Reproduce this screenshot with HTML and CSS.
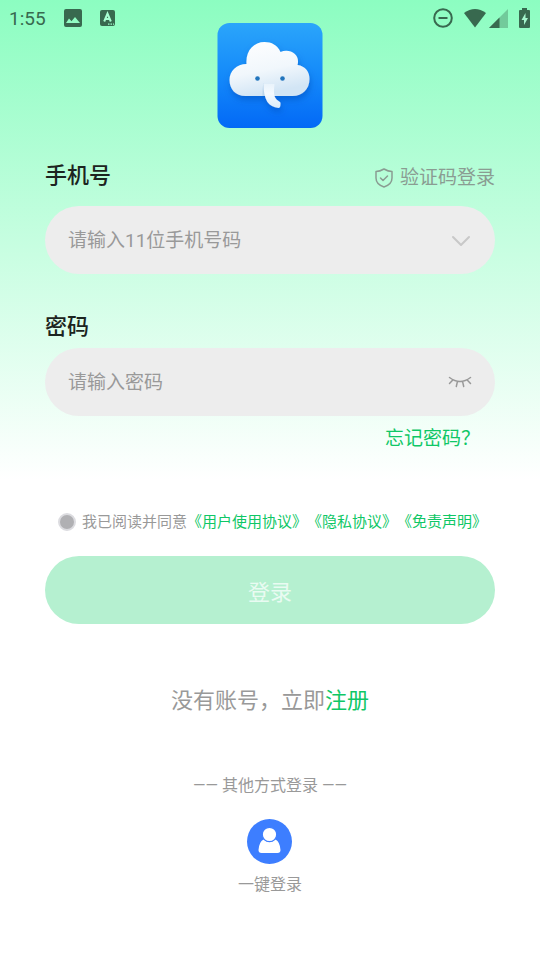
FILE: index.html
```html
<!DOCTYPE html>
<html lang="zh-CN">
<head>
<meta charset="utf-8">
<meta name="viewport" content="width=device-width, initial-scale=1">
<title>登录</title>
<link rel="stylesheet" href="styles.css">
</head>
<body>
<div class="status-bar">
  <div class="status-left">
    <span class="clock">1:55</span>
    <svg width="18" height="18" viewBox="0 0 18 18"><path fill="currentColor" fill-rule="evenodd" d="M2 0h14a2 2 0 0 1 2 2v14a2 2 0 0 1-2 2H2a2 2 0 0 1-2-2V2a2 2 0 0 1 2-2ZM2 14h14l-5-6-3.500 4.300L5 9.600Z"/></svg>
    <svg width="15" height="16" viewBox="0 0 15 16"><rect width="15" height="16" rx="2" fill="currentColor"/><path d="m4.200 11.500 3.300-8 3.300 8M5.500 9h4" fill="none" stroke="#a8ffd2" stroke-width="2"/><path d="M8 14.200h1.500M10.500 14.200H12M13 14.200h1" stroke="#9affca" stroke-width="1.200"/></svg>
  </div>
  <div class="status-right">
    <svg width="20" height="20" viewBox="0 0 20 20" fill="none" stroke="currentColor" stroke-width="2"><circle cx="10" cy="10" r="8.800"/><path d="M5.500 10h9"/></svg>
    <svg class="wifi" width="22" height="19" viewBox="0 0 22 19"><path fill="currentColor" d="M0 4Q11-4 22 4L11 18.500Z"/></svg>
    <svg class="signal" width="19" height="19" viewBox="0 0 19 19"><path fill="currentColor" opacity=".35" d="M19 0v19H0Z"/><path fill="currentColor" d="M10.500 8.500V19H0Z"/></svg>
    <svg width="11" height="20" viewBox="0 0 11 20"><path fill="currentColor" d="M3 0h5v2h2a1 1 0 0 1 1 1v16a1 1 0 0 1-1 1H1a1 1 0 0 1-1-1V3a1 1 0 0 1 1-1h2Z"/><path fill="#a5f5cd" d="M6.500 5 2.500 12H5v5l4-7H6.500Z"/></svg>
  </div>
</div>
<main class="page">
  <svg class="logo" viewBox="0 0 105 105" role="img" aria-label="云朵小象">
    <defs>
      <linearGradient id="sky" x1="0" y1="0" x2="0" y2="1"><stop offset="0" stop-color="#2ba5fa"/><stop offset=".5" stop-color="#148afa"/><stop offset="1" stop-color="#0369f6"/></linearGradient>
      <linearGradient id="cloud" x1="0" y1="0" x2=".3" y2="1"><stop offset="0" stop-color="#fff"/><stop offset=".6" stop-color="#f1f7fc"/><stop offset="1" stop-color="#d2e5f5"/></linearGradient>
      <linearGradient id="trunk" x1="0" y1="0" x2="0" y2="1"><stop offset="0" stop-color="#e9f3fb"/><stop offset=".4" stop-color="#f5faff"/><stop offset="1" stop-color="#dcecf9"/></linearGradient>
      <filter id="shade" x="-20%" y="-20%" width="140%" height="150%"><feDropShadow dx="1" dy="4" stdDeviation="3" flood-color="#0448b8" flood-opacity=".5"/></filter>
    </defs>
    <rect width="105" height="105" rx="12" fill="url(#sky)"/>
    <g filter="url(#shade)">
      <path fill="url(#cloud)" d="M28 73C18 73 12 66 12 57c0-9 7-16 17-16C28 28 36 19 47 19c7 0 13 3 16 10 10-4 20 3 17 13 8 1 12 7 12 14 0 10-7 17-17 17Z"/>
      <path fill="#a9c8e4" opacity=".6" d="M45 73c0-4 0-9 1-13l3 13Z"/>
      <path fill="url(#trunk)" d="M46 61C46 77 51 84 61 85c2 0 2-3 2-5 0-1-1-1-2-2-5-3-5-8-4-17Z"/>
    </g>
    <circle cx="40" cy="55.500" r="2.300" fill="#2275bd"/><circle cx="65" cy="55.500" r="2.300" fill="#2275bd"/>
  </svg>

  <form class="login">
    <div class="label-row">
      <label class="label" for="phone">手机号</label>
      <a class="code-login" href="#">
        <svg width="20" height="20" viewBox="0 0 20 20" fill="none" stroke="currentColor" stroke-width="1.500" stroke-linejoin="round" stroke-linecap="round"><path d="M10 1c3 1.800 5.500 2.500 8 2.500V10c0 4.500-3.500 7.500-8 9-4.500-1.500-8-4.500-8-9V3.500C4.500 3.500 7 2.800 10 1Z"/><path d="m6.500 10 2.500 2.500 4.500-4.500"/></svg>
        验证码登录
      </a>
    </div>
    <div class="field">
      <input id="phone" type="tel" placeholder="请输入11位手机号码">
      <button class="icon-button chevron" type="button" aria-label="选择账号"><svg width="24" height="24" viewBox="0 0 24 24" fill="none" stroke="currentColor" stroke-width="2" stroke-linecap="round" stroke-linejoin="round"><path d="m5 9 8 8 8-8"/></svg></button>
    </div>
    <label class="label password-label" for="password">密码</label>
    <div class="field">
      <input id="password" type="password" placeholder="请输入密码">
      <button class="icon-button" type="button" aria-label="显示密码"><svg width="24" height="24" viewBox="0 0 24 24" fill="none" stroke="currentColor" stroke-width="1.500" stroke-linecap="round"><path d="M1.500 7.500Q12 15.500 22.500 7.500M4.800 10l-3.300 3.500M9.300 12.200 8.300 16.500M14.700 12.200l1 4.300M19.200 10l3.300 3.500"/></svg></button>
    </div>
    <a class="forgot" href="#">忘记密码？</a>
    <div class="agreement">
      <input id="agree" type="checkbox">
      <p><label for="agree">我已阅读并同意</label><a href="#">《用户使用协议》</a><a href="#">《隐私协议》</a><a href="#">《免责声明》</a></p>
    </div>
    <button class="submit" type="submit">登录</button>
  </form>

  <p class="signup">没有账号，立即<a href="#">注册</a></p>
  <p class="other">—— 其他方式登录 ——</p>
  <button class="quick" type="button">
    <svg width="45" height="45" viewBox="0 0 45 45"><circle cx="22.500" cy="22.500" r="22.500" fill="#3d7eff"/><path fill="#fff" d="M16.500 20.500Q22.500 25 28.500 20.500 33 23 33.500 31q0 3-3 3h-16q-3 0-3-3Q12 23 16.500 20.500Z"/><circle cx="22.500" cy="15.500" r="7.200" fill="#fff" stroke="#3d7eff" stroke-width="1.200"/></svg>
    一键登录
  </button>
</main>
</body>
</html>
```

FILE: styles.css
```css
* {
  box-sizing: border-box;
}

body {
  margin: 0;
  min-height: 100vh;
  color: #999;
  background: #fff linear-gradient(#8cfdc1, #fff) no-repeat 0 0 / 100% 480px;
  font-family: Roboto, "Noto Sans CJK SC", sans-serif;
  text-spacing-trim: space-all;
}

a {
  color: #0fc766;
  text-decoration: none;
}

p {
  margin: 0;
}

button,
input {
  font: inherit;
}

button {
  padding: 0;
  border: 0;
  background: none;
}

svg {
  display: block;
  flex: none;
}

/* System bar floats above the page */
.status-bar {
  position: absolute;
  top: 0;
  left: 0;
  right: 0;
  height: 36px;
  padding: 0 10px 0 9px;
  display: flex;
  align-items: center;
  justify-content: space-between;
  color: #38694f;
}

.status-left,
.status-right {
  display: flex;
  align-items: center;
}

.clock {
  font-size: 19px;
}

.status-left {
  gap: 18px;
}

.status-right {
  gap: 11px;
}

.signal {
  margin-left: -8px;
}

.page {
  padding: 23px 45px;
  display: flex;
  flex-direction: column;
  align-items: center;
}

.logo {
  width: 106px;
  height: 105px;
}

.login {
  width: 100%;
  margin-top: 32px;
  display: flex;
  flex-direction: column;
}

.label-row {
  display: flex;
  align-items: flex-end;
  justify-content: space-between;
  margin-bottom: 14px;
}

.label {
  color: #1c2420;
  font-size: 22px;
  font-weight: 500;
  line-height: 32px;
}

.code-login {
  display: flex;
  align-items: center;
  gap: 6px;
  color: #8a9c92;
  font-size: 19px;
  line-height: 28px;
}

.field {
  height: 68px;
  padding: 0 23px;
  display: flex;
  align-items: center;
  border-radius: 34px;
  background: #ededed;
}

.field input {
  flex: 1;
  min-width: 0;
  padding: 0;
  border: 0;
  outline: 0;
  color: #333;
  background: none;
  font-size: 19px;
}

.field input::placeholder {
  color: #999;
}

.icon-button {
  color: #999;
}

.chevron {
  color: #c8c8c8;
}

.password-label {
  margin-top: 37px;
  margin-bottom: 5px;
}

.forgot {
  align-self: flex-end;
  margin-top: 7px;
  margin-right: 15px;
  font-size: 19px;
  line-height: 32px;
}

.agreement {
  margin-top: 55px;
  padding-left: 13px;
  display: flex;
  align-items: center;
  gap: 6px;
  font-size: 15px;
  line-height: 24px;
  white-space: nowrap;
}

.agreement input {
  appearance: none;
  flex: none;
  width: 18px;
  height: 18px;
  margin: 0;
  border: 2px solid #dcdce0;
  border-radius: 50%;
  background: #b0b0b3;
}

.submit {
  height: 68px;
  margin-top: 22px;
  border-radius: 34px;
  color: #e9fbf2;
  background: #b5f0d0;
  font-size: 22px;
}

.signup {
  margin-top: 61px;
  font-size: 22px;
  line-height: 32px;
}

.other {
  margin-top: 57px;
  font-size: 16px;
  line-height: 24px;
}

.quick {
  margin-top: 21px;
  display: flex;
  flex-direction: column;
  align-items: center;
  gap: 9px;
  color: #999;
  font-size: 16px;
  line-height: 24px;
}
```
